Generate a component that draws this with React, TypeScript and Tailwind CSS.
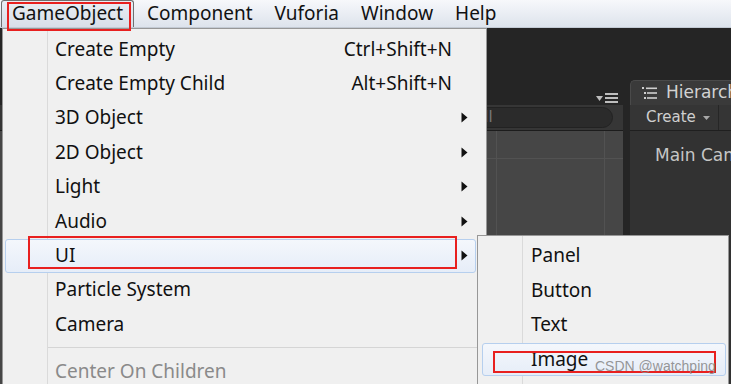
const menuFont = "font-['Noto_Sans','DejaVu_Sans',sans-serif]";

type Item = { label: string; shortcut?: string; sub?: boolean; hot?: boolean; disabled?: boolean };

const mainItems: Item[] = [
  { label: "Create Empty", shortcut: "Ctrl+Shift+N" },
  { label: "Create Empty Child", shortcut: "Alt+Shift+N" },
  { label: "3D Object", sub: true },
  { label: "2D Object", sub: true },
  { label: "Light", sub: true },
  { label: "Audio", sub: true },
  { label: "UI", sub: true, hot: true },
  { label: "Particle System" },
  { label: "Camera" },
];

const uiItems: Item[] = [
  { label: "Panel" },
  { label: "Button" },
  { label: "Text" },
  { label: "Image", hot: true },
];

function Arrow() {
  return (
    <svg width="7" height="11" viewBox="0 0 7 11" className="block">
      <path d="M0.5 0.5 L6.5 5.5 L0.5 10.5 Z" fill="#111" />
    </svg>
  );
}

function Highlight({ left, right }: { left: string; right: string }) {
  // the hovered row's pale blue box, behind the label
  return (
    <div
      className={`pointer-events-none absolute top-[1px] bottom-0 rounded-[3px] border border-[#b6cfee] bg-gradient-to-b from-[#f4f7fc] to-[#e6edf8] ${left} ${right}`}
    />
  );
}

function MenuBar() {
  const labels = ["GameObject", "Component", "Vuforia", "Window", "Help"];
  return (
    <div className="flex h-[28px] items-stretch border-b border-[#c3cad4] bg-gradient-to-b from-[#f7f8fb] to-[#dde3ec] pl-[1px]">
      {labels.map((l, i) => (
        <div
          key={l}
          className={`flex items-center px-[10px] text-[19px] leading-none text-[#111] ${
            i === 0
              ? "mr-[2px] rounded-t-[3px] border border-b-0 border-[#6f6f6f] bg-gradient-to-b from-[#e9edf3] to-[#d9dfe8]"
              : "border border-transparent"
          }`}
        >
          <span className="-mt-[1px]">{l}</span>
        </div>
      ))}
    </div>
  );
}

function ListIcon() {
  return (
    <svg width="15" height="12" viewBox="0 0 15 12" className="block shrink-0">
      <rect x="0" y="0" width="2" height="2" fill="#cfcfcf" />
      <rect x="4" y="0.5" width="11" height="1.6" fill="#cfcfcf" />
      <rect x="2" y="5" width="2" height="2" fill="#cfcfcf" />
      <rect x="5" y="5.2" width="10" height="1.6" fill="#cfcfcf" />
      <rect x="2" y="10" width="2" height="2" fill="#cfcfcf" />
      <rect x="5" y="10.2" width="10" height="1.6" fill="#cfcfcf" />
    </svg>
  );
}

function Editor() {
  return (
    <div className="flex h-[356px] bg-[#252525] font-['DejaVu_Sans',sans-serif]">
      {/* project panel, mostly under the menu */}
      <div className="flex w-[623px] shrink-0 flex-col">
        <div className="flex h-[77px] items-end justify-end pb-[2px] pr-[5px]">
          <div className="flex items-center gap-[2px]">
            <svg width="7" height="5" viewBox="0 0 7 5">
              <path d="M0 0 H7 L3.5 5 Z" fill="#bdbdbd" />
            </svg>
            <svg width="13" height="10" viewBox="0 0 13 10">
              <rect y="0" width="13" height="2" fill="#bdbdbd" />
              <rect y="4" width="13" height="2" fill="#bdbdbd" />
              <rect y="8" width="13" height="2" fill="#bdbdbd" />
            </svg>
          </div>
        </div>
        <div className="flex h-[26px] items-center justify-end border-b border-[#1c1c1c] bg-[#363636] pr-[10px]">
          <div className="flex h-[21px] w-[200px] items-center rounded-full border border-[#222] bg-[#2b2b2b] pl-[60px] text-[15px] text-[#7a7a7a]">
            All
          </div>
        </div>
        <div className="grid flex-1 grid-cols-[10px_108px_1fr] grid-rows-[28px_1fr] bg-[#464646] pl-[487px]">
          <div className="border-r border-b border-[#525252]" />
          <div className="border-r border-b border-[#525252]" />
          <div className="border-b border-[#525252]" />
          <div className="border-r border-[#525252]" />
          <div className="border-r border-[#525252]" />
          <div />
        </div>
      </div>
      {/* hierarchy panel */}
      <div className="ml-[7px] flex min-w-0 flex-1 flex-col overflow-hidden pt-[52px]">
        <div className="flex h-[25px] items-center gap-[9px] rounded-tl-[5px] border-t border-l border-[#4a4a4a] bg-[#3a3a3a] pl-[11px] text-[17px] text-[#d2d2d2]">
          <ListIcon />
          <span className="whitespace-nowrap">Hierarchy</span>
        </div>
        <div className="flex h-[26px] items-center border-b border-[#1f1f1f] bg-[#353535]">
          <div className="flex h-full w-[89px] shrink-0 items-center gap-[7px] border-r border-[#262626] pl-[16px] text-[15px] text-[#cfcfcf]">
            <span>Create</span>
            <svg width="7" height="4" viewBox="0 0 7 4">
              <path d="M0 0 H7 L3.5 4 Z" fill="#a8a8a8" />
            </svg>
          </div>
        </div>
        <div className="flex-1 bg-[#323232] pl-[25px] pt-[12px] text-[17px] text-[#c6c6c6]">
          <span className="whitespace-nowrap">Main Camera</span>
        </div>
      </div>
    </div>
  );
}

function MainMenu() {
  return (
    <div className={`absolute left-[2px] top-[28px] h-[360px] w-[485px] border border-[#979797] bg-[#f0f0f0] pt-[3px] ${menuFont}`}>
      <div className="absolute inset-y-0 left-[44px] w-[2px] border-l border-[#dadada] border-r-white" />
      {mainItems.map((it) => (
        <div key={it.label} className="relative flex h-[34.4px] items-center text-[19px] leading-none text-[#111]">
          {it.hot && <Highlight left="left-[2px]" right="right-[10px]" />}
          <span className="relative pl-[52px]">{it.label}</span>
          <span className="relative ml-auto">{it.shortcut}</span>
          <span className="relative w-[34px] pl-[9px]">{it.sub && <Arrow />}</span>
        </div>
      ))}
      <div className="ml-[45px] flex h-[12.4px] items-center">
        <div className="h-[2px] w-full border-t border-[#d5d5d5] border-b-white" />
      </div>
      <div className="flex h-[34.4px] items-center pl-[52px] text-[19px] leading-none text-[#8a8a8a]">Center On Children</div>
    </div>
  );
}

function UiMenu() {
  return (
    <div className={`absolute left-[477px] top-[235px] h-[160px] w-[252px] border border-[#979797] bg-[#f0f0f0] pt-[2.8px] ${menuFont}`}>
      <div className="absolute inset-y-0 left-[44px] w-[2px] border-l border-[#dadada] border-r-white" />
      {uiItems.map((it) => (
        <div key={it.label} className="relative flex h-[34.4px] items-center text-[19px] leading-none text-[#111]">
          {it.hot && <Highlight left="left-[4px]" right="right-[2px]" />}
          <span className="relative pl-[53px]">{it.label}</span>
        </div>
      ))}
    </div>
  );
}

export default function App() {
  return (
    <div className={`relative h-[384px] w-[731px] overflow-hidden bg-[#f0f0f0] ${menuFont}`}>
      <MenuBar />
      <Editor />
      <MainMenu />
      <UiMenu />

      {/* red annotation boxes */}
      <div className="absolute left-[7px] top-[2px] h-[29px] w-[124px] border-2 border-[#e8201f]" />
      <div className="absolute left-[28px] top-[236px] h-[33px] w-[429px] border-2 border-[#e8201f]" />
      <div className="absolute left-[493px] top-[351px] h-[22px] w-[223px] border-2 border-[#e8201f]" />

      <div className="absolute left-[595px] top-[359px] font-['Liberation_Sans',Arial,sans-serif] text-[14px] leading-none text-[#8a8a8a]/90">
        CSDN @watchping
      </div>
    </div>
  );
}
